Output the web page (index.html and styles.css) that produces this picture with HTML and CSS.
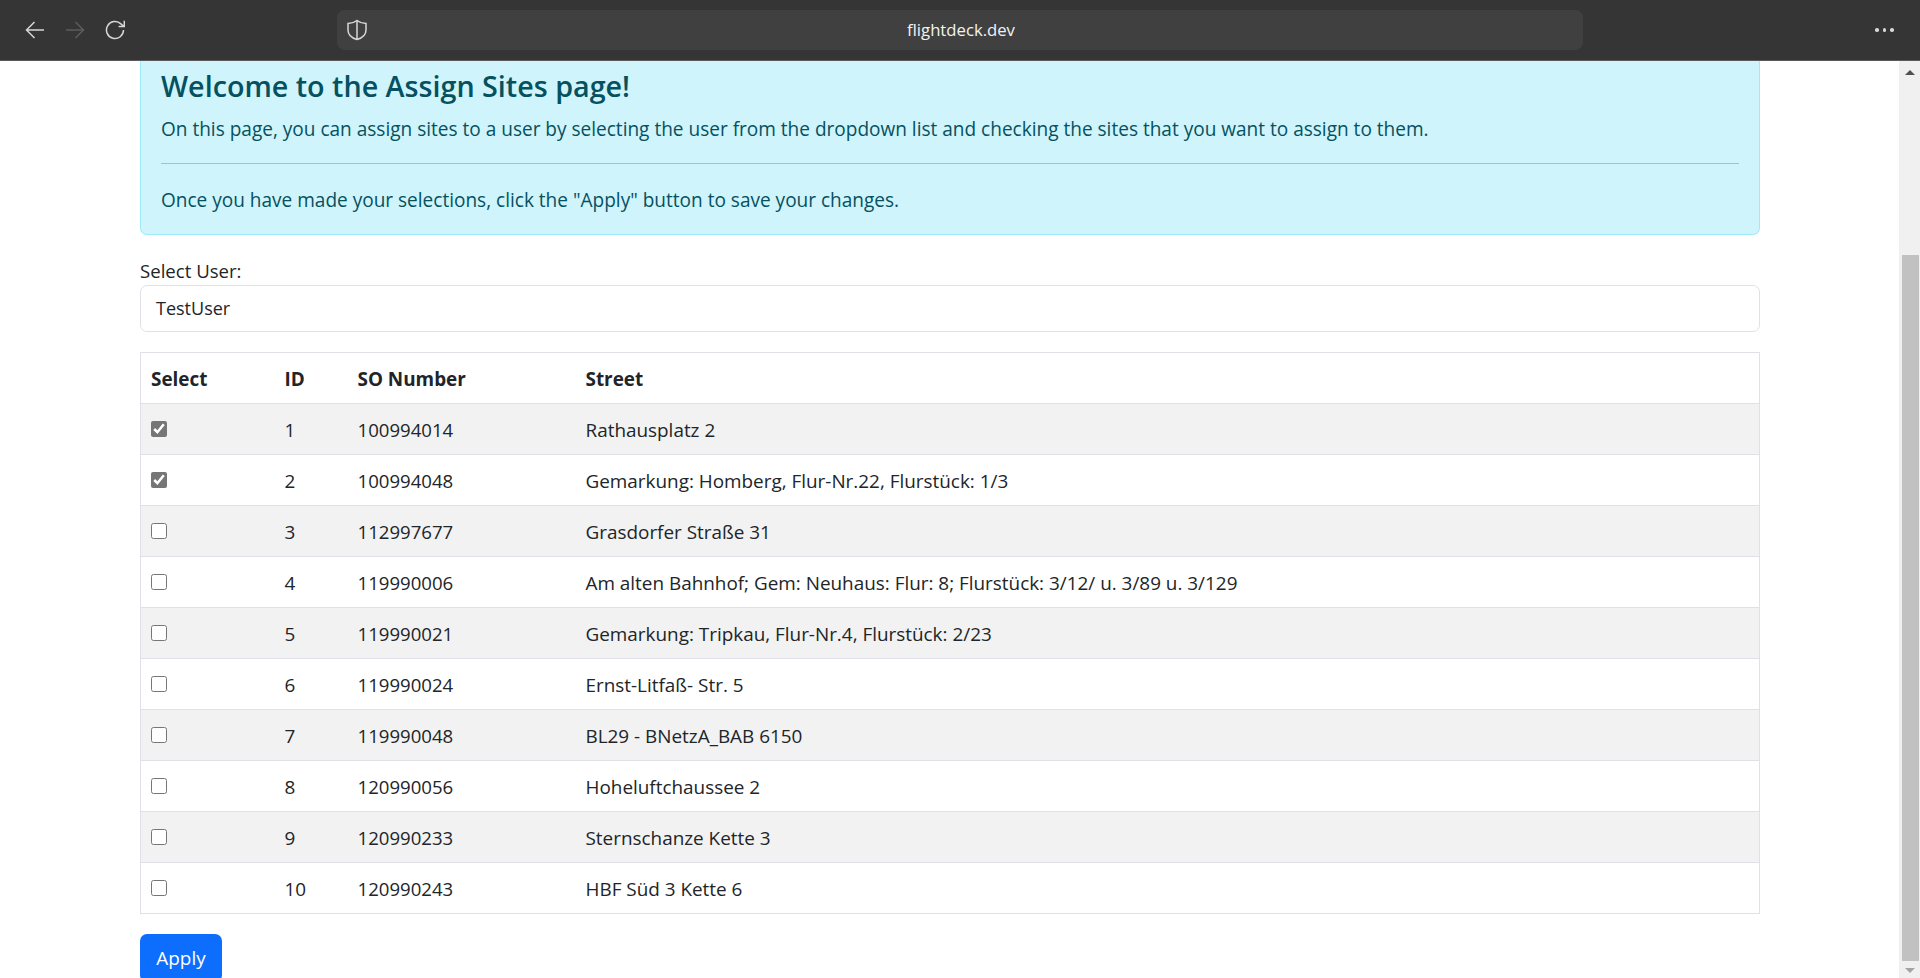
FILE: index.html
```html
<!DOCTYPE html>
<html lang="en">
<head>
<meta charset="UTF-8" />
<meta name="viewport" content="width=device-width, initial-scale=1" />
<title>Assign Sites</title>
<link rel="stylesheet" href="styles.css">
</head>
<body>

<div class="toolbar">
  <div class="nav-btns">
    <svg class="nav-icon" viewBox="0 0 20 20"><path d="M19 10H2M9.500 2L1.500 10l8 8" /></svg>
    <svg class="nav-icon dim" viewBox="0 0 20 20"><path d="M1 10h17M10.500 2l8 8-8 8" /></svg>
    <svg class="nav-icon" viewBox="0 0 20 20"><path d="M18.500 10a8.500 8.500 0 1 1-2.600-6.100L19 6.500M19.300 0.800V6.500H13.600" /></svg>
  </div>
  <div class="urlbar">
    <svg class="shield" viewBox="0 0 20 22"><path d="M10 1.500C7.500 3.500 4.500 4.300 1 4.500V11c0 4.500 3.500 8 9 9.500 5.500-1.500 9-5 9-9.500V4.500C15.500 4.300 12.500 3.500 10 1.500zM10 1.500v19" /></svg>
    <span class="url">flightdeck.dev</span>
  </div>
  <div class="dots"><i></i><i></i><i></i></div>
</div>

<div class="viewport">
  <main class="page">
    <div class="alert">
      <h4>Welcome to the Assign Sites page!</h4>
      <p>On this page, you can assign sites to a user by selecting the user from the dropdown list and checking the sites that you want to assign to them.</p>
      <hr />
      <p>Once you have made your selections, click the "Apply" button to save your changes.</p>
    </div>

    <label class="field-label" for="user">Select User:</label>
    <div class="select" id="user">TestUser</div>

    <table class="sites">
      <thead>
        <tr><th class="col-select">Select</th><th class="col-id">ID</th><th class="col-so">SO Number</th><th>Street</th></tr>
      </thead>
      <tbody>
        <tr><td><input type="checkbox" checked /></td><td>1</td><td class="num">100994014</td><td>Rathausplatz 2</td></tr>
        <tr><td><input type="checkbox" checked /></td><td>2</td><td class="num">100994048</td><td>Gemarkung: Homberg, Flur-Nr.22, Flurstück: 1/3</td></tr>
        <tr><td><input type="checkbox" /></td><td>3</td><td class="num">112997677</td><td>Grasdorfer Straße 31</td></tr>
        <tr><td><input type="checkbox" /></td><td>4</td><td class="num">119990006</td><td>Am alten Bahnhof; Gem: Neuhaus: Flur: 8; Flurstück: 3/12/ u. 3/89 u. 3/129</td></tr>
        <tr><td><input type="checkbox" /></td><td>5</td><td class="num">119990021</td><td>Gemarkung: Tripkau, Flur-Nr.4, Flurstück: 2/23</td></tr>
        <tr><td><input type="checkbox" /></td><td>6</td><td class="num">119990024</td><td>Ernst-Litfaß- Str. 5</td></tr>
        <tr><td><input type="checkbox" /></td><td>7</td><td class="num">119990048</td><td>BL29 - BNetzA_BAB 6150</td></tr>
        <tr><td><input type="checkbox" /></td><td>8</td><td class="num">120990056</td><td>Hoheluftchaussee 2</td></tr>
        <tr><td><input type="checkbox" /></td><td>9</td><td class="num">120990233</td><td>Sternschanze Kette 3</td></tr>
        <tr><td><input type="checkbox" /></td><td>10</td><td class="num">120990243</td><td>HBF Süd 3 Kette 6</td></tr>
      </tbody>
    </table>

    <button class="btn-apply">Apply</button>
  </main>

  <div class="scrollbar">
    <div class="arrow up"></div>
    <div class="track"><div class="thumb"></div></div>
    <div class="arrow down"></div>
  </div>
</div>

</body>
</html>
```

FILE: styles.css
```css
* {
  box-sizing: border-box;
}
html, body {
  height: 100%;
}
body {
  margin: 0;
  display: flex;
  flex-direction: column;
  overflow: hidden;
  font-family: "Open Sans", "Noto Sans", sans-serif;
  font-size: 18.9px;
  line-height: 30px;
  color: #212529;
  background: #fff;
}

/* browser bar */
.toolbar {
  flex: 0 0 61px;
  display: flex;
  align-items: center;
  background: #353535;
  border-bottom: 1px solid #5a5a5a;
  padding-left: 25px;
  color: #fff;
}
.nav-btns {
  display: flex;
  gap: 20px;
  width: 312px;
}
.nav-icon {
  width: 20px;
  height: 20px;
  fill: none;
  stroke: #d6d6d6;
  stroke-width: 1.5;
}
.nav-icon.dim {
  stroke: #5c5c5c;
}
.urlbar {
  width: 1246px;
  height: 40px;
  background: #404040;
  border-radius: 8px;
  display: flex;
  align-items: center;
  justify-content: center;
  position: relative;
}
.shield {
  position: absolute;
  left: 10px;
  top: 9px;
  width: 20px;
  height: 22px;
  fill: none;
  stroke: #d6d6d6;
  stroke-width: 1.5;
}
.url {
  font-size: 16.7px;
  margin-left: 2px;
  color: #f2f2f2;
}
.dots {
  margin-left: 292px;
  display: flex;
  gap: 4px;
}
.dots i {
  width: 3.5px;
  height: 3.5px;
  border-radius: 50%;
  background: #d8d8d8;
}

/* page */
.viewport {
  flex: 1;
  display: flex;
  min-height: 0;
}
.page {
  flex: 1;
  padding: 0 139px 0 140px;
  overflow: hidden;
}
.alert {
  height: 174px;
  padding: 7px 20px 0;
  background: #cff4fc;
  border: 1px solid #9eeaf9;
  border-top: 0;
  border-radius: 0 0 7px 7px;
  color: #055160;
  font-size: 19.05px;
}
.alert h4 {
  margin: 0 0 10px;
  font-size: 28.7px;
  line-height: 36px;
  font-weight: 600;
}
.alert p {
  margin: 0;
}
.alert hr {
  margin: 19px 0 21px;
  border: 0;
  border-top: 1px solid #9ec5ce;
}
.field-label {
  display: block;
  margin-top: 21px;
  font-size: 18.6px;
}
.select {
  height: 47px;
  margin-top: -1px;
  padding: 7px 15px;
  border: 1px solid #dee2e6;
  border-radius: 7px;
  font-size: 18px;
}
.sites {
  width: 100%;
  margin-top: 20px;
  border-collapse: collapse;
  table-layout: fixed;
  border-left: 1px solid #dee2e6;
  border-right: 1px solid #dee2e6;
}
.sites th, .sites td {
  height: 51px;
  padding: 11px 10px 9px;
  border: 1px solid #dee2e6;
  border-left: 0;
  border-right: 0;
  text-align: left;
  vertical-align: top;
}
.sites th {
  font-weight: 700;
}
.sites .num {
  font-size: 18.6px;
}
.col-select {
  width: 134px;
}
.col-id {
  width: 73px;
}
.col-so {
  width: 228px;
}
.sites tbody tr:nth-child(odd) {
  background: #f2f2f2;
}
.sites input {
  width: 16px;
  height: 16px;
  margin: 6px 0 0;
  accent-color: #767676;
  vertical-align: top;
}
.btn-apply {
  display: block;
  margin-top: 20px;
  height: 48px;
  padding: 0 15px;
  width: 82px;
  border: 0;
  border-radius: 7px;
  background: #0d6efd;
  color: #fff;
  font: inherit;
}

/* scrollbar */
.scrollbar {
  flex: 0 0 21px;
  display: flex;
  flex-direction: column;
  align-items: center;
  background: #f0f0f0;
  padding-left: 1px;
}
.arrow {
  width: 0;
  height: 0;
  flex: 0 0 5px;
  border-left: 5px solid transparent;
  border-right: 5px solid transparent;
}
.arrow.up {
  margin: 9px 0 6px;
  border-bottom: 5px solid #505050;
}
.arrow.down {
  margin: 7px 0 5px;
  border-top: 5px solid #a3a3a3;
}
.track {
  flex: 1;
  width: 17px;
  padding-top: 174px;
}
.thumb {
  height: 100%;
  background: #c1c1c1;
}
```
